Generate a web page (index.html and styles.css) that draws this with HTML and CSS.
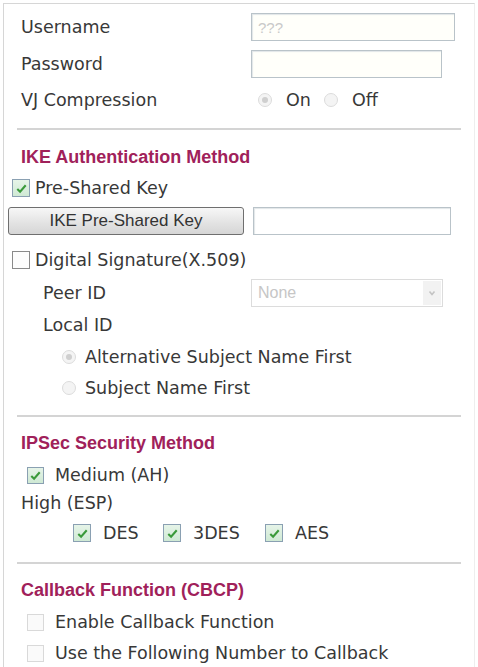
FILE: index.html
```html
<!DOCTYPE html>
<html>
<head>
<meta charset="utf-8">
<link rel="stylesheet" href="styles.css">
</head>
<body>
<div class="panel">
  <div class="row r-user">
    <span class="label">Username</span>
    <span class="input wide"><span class="ph">???</span></span>
  </div>
  <div class="row r-pass">
    <span class="label">Password</span>
    <span class="input pass"></span>
  </div>
  <div class="row r-vj">
    <span class="label">VJ Compression</span>
    <span class="radios">
      <span class="radio on"></span><span class="rtext">On</span>
      <span class="radio"></span><span class="rtext">Off</span>
    </span>
  </div>
  <div class="sep sep1"></div>

  <div class="heading h-ike">IKE Authentication Method</div>
  <div class="row r-psk">
    <span class="cb checked small-ind"><svg viewBox="0 0 16 16"><path d="M3.5 8.5 L6.5 11.5 L12.5 4.5" fill="none" stroke="#3a9a3a" stroke-width="2.2"/></svg></span>
    <span class="cbtext">Pre-Shared Key</span>
  </div>
  <div class="row r-btn">
    <span class="button">IKE Pre-Shared Key</span>
    <span class="input keyin"></span>
  </div>
  <div class="row r-dig">
    <span class="cb plain small-ind"></span>
    <span class="cbtext">Digital Signature(X.509)</span>
  </div>
  <div class="row r-peer">
    <span class="label ind">Peer ID</span>
    <span class="select"><span class="sel-text">None</span><span class="sel-btn"><svg viewBox="0 0 10 10"><path d="M2.5 3.5 L5 6.5 L7.5 3.5" fill="none" stroke="#c4c4c4" stroke-width="1.6"/></svg></span></span>
  </div>
  <div class="row r-local">
    <span class="label ind">Local ID</span>
  </div>
  <div class="row r-alt">
    <span class="radio on rind"></span><span class="rtext">Alternative Subject Name First</span>
  </div>
  <div class="row r-subj">
    <span class="radio rind"></span><span class="rtext">Subject Name First</span>
  </div>
  <div class="sep sep2"></div>

  <div class="heading h-ipsec">IPSec Security Method</div>
  <div class="row r-med">
    <span class="cb checked mind"><svg viewBox="0 0 16 16"><path d="M3.5 8.5 L6.5 11.5 L12.5 4.5" fill="none" stroke="#3a9a3a" stroke-width="2.2"/></svg></span>
    <span class="cbtext gap">Medium (AH)</span>
  </div>
  <div class="row r-high">
    <span class="label">High (ESP)</span>
  </div>
  <div class="row r-des">
    <span class="cb checked big"><svg viewBox="0 0 16 16"><path d="M3.5 8.5 L6.5 11.5 L12.5 4.5" fill="none" stroke="#3a9a3a" stroke-width="2.2"/></svg></span>
    <span class="cbtext des-gap w-des">DES</span>
    <span class="cb checked big"><svg viewBox="0 0 16 16"><path d="M3.5 8.5 L6.5 11.5 L12.5 4.5" fill="none" stroke="#3a9a3a" stroke-width="2.2"/></svg></span>
    <span class="cbtext des-gap w-3des">3DES</span>
    <span class="cb checked big"><svg viewBox="0 0 16 16"><path d="M3.5 8.5 L6.5 11.5 L12.5 4.5" fill="none" stroke="#3a9a3a" stroke-width="2.2"/></svg></span>
    <span class="cbtext des-gap">AES</span>
  </div>
  <div class="sep sep3"></div>

  <div class="heading h-cb">Callback Function (CBCP)</div>
  <div class="row r-en">
    <span class="cb disabled mind"></span>
    <span class="cbtext gap">Enable Callback Function</span>
  </div>
  <div class="row r-use">
    <span class="cb disabled mind"></span>
    <span class="cbtext gap">Use the Following Number to Callback</span>
  </div>
</div>
</body>
</html>
```
FILE: styles.css
```css
html, body {
  margin: 0;
  padding: 0;
  background: #ffffff;
}
body {
  font-family: "DejaVu Sans", Verdana, sans-serif;
  font-size: 17.5px;
  color: #383838;
  width: 478px;
  height: 667px;
  overflow: hidden;
}
.panel {
  margin: 3px 0 0 3px;
  width: 472px;
  height: 664px;
  overflow: hidden;
  border-left: 1px solid #d6d6d6;
  border-top: 1px solid #d6d6d6;
  border-right: 1px solid #eeeeee;
  padding-top: 5px;
  box-sizing: border-box;
}
.row {
  display: flex;
  align-items: center;
  padding-left: 17px;
}
.label {
  width: 230px;
  flex: none;
}
.label.ind {
  padding-left: 22px;
  width: 208px;
}
.r-user { height: 36px; }
.r-pass { height: 37px; }
.r-vj { height: 36px; }
.input {
  box-sizing: border-box;
  height: 28px;
  border: 1px solid #b9c3c9;
  box-shadow: inset 1px 1px 1px #e2e6e8;
  background: #fffffa;
  display: flex;
  align-items: center;
  padding-left: 6px;
}
.input.wide { width: 204px; }
.input.pass { width: 191px; }
.input.keyin { width: 198px; margin-left: 9px; background: #fff; }
.ph {
  font-family: "Liberation Sans", Arial, sans-serif;
  font-size: 15px;
  color: #c9c9c9;
}
.radios {
  display: flex;
  align-items: center;
  padding-left: 7px;
}
.radio {
  width: 14px;
  height: 14px;
  border-radius: 50%;
  border: 1px solid #dcdcdc;
  background: #f4f4f4;
  box-sizing: border-box;
  position: relative;
  flex: none;
}
.radio.on::after {
  content: "";
  position: absolute;
  left: 3px;
  top: 3px;
  width: 6px;
  height: 6px;
  border-radius: 50%;
  background: #cfcfcf;
}
.rtext { margin-left: 9px; }
.radios .rtext { margin-left: 14px; margin-right: 13px; }
.rind { margin-left: 41px; }

.sep {
  height: 2px;
  background: #d4d4d4;
  margin-left: 13px;
  width: 444px;
}
.sep1 { margin-top: 10px; }
.sep2 { margin-top: 13px; }
.sep3 { margin-top: 9px; }

.heading {
  height: 28px;
  display: flex;
  align-items: center;
  padding-left: 17px;
  font-family: "Liberation Sans", Arial, sans-serif;
  font-weight: bold;
  font-size: 18px;
  color: #a0215a;
}
.h-ike { margin-top: 13px; }
.h-ipsec { margin-top: 12px; }
.h-cb { margin-top: 12px; }

.cb {
  width: 17px;
  height: 17px;
  box-sizing: border-box;
  flex: none;
  display: flex;
  align-items: center;
  justify-content: center;
}
.cb svg { width: 15px; height: 15px; }
.cb.big { width: 18px; height: 18px; }
.cb.checked {
  border: 1px solid #8aa0b2;
  background: linear-gradient(#e6f4e8, #cfe9d4);
}
.cb.plain {
  border: 1px solid #8a8a8a;
  background: #fdfdfd;
}
.cb.disabled {
  border: 1px solid #d9d9d9;
  background: #fafafa;
}
.small-ind { margin-left: -9px; width: 18px; height: 18px; }
.mind { margin-left: 6px; }
.cbtext { margin-left: 5px; }
.cbtext.gap { margin-left: 11px; }
.cbtext.des-gap { margin-left: 12px; }

.r-psk { height: 34px; }
.r-btn { height: 28px; margin-top: 2px; padding-left: 4px; }
.button {
  box-sizing: border-box;
  width: 236px;
  height: 28px;
  border: 1px solid #6f6f6f;
  border-radius: 3px;
  background: linear-gradient(#f7f7f7, #e2e2e2 60%, #d6d6d6);
  font-family: "Liberation Sans", Arial, sans-serif;
  font-size: 17px;
  color: #333;
  display: flex;
  align-items: center;
  justify-content: center;
  flex: none;
}
.r-dig { height: 32px; margin-top: 9px; }
.r-peer { height: 34px; }
.select {
  box-sizing: border-box;
  width: 192px;
  height: 28px;
  border: 1px solid #dcdcdc;
  background: #fff;
  display: flex;
  align-items: center;
  justify-content: space-between;
  padding-left: 6px;
}
.sel-text {
  font-family: "Liberation Sans", Arial, sans-serif;
  font-size: 16px;
  color: #c6c6c6;
}
.sel-btn {
  width: 18px;
  height: 24px;
  margin-right: 1px;
  background: #f2f2f2;
  display: flex;
  align-items: center;
  justify-content: center;
}
.sel-btn svg { width: 10px; height: 10px; }
.r-local { height: 30px; }
.r-alt { height: 34px; }
.r-subj { height: 28px; }

.r-med { height: 36px; }
.r-high { height: 20px; }
.r-des { height: 40px; padding-left: 69px; }
.w-des { width: 60px; }
.w-3des { width: 72px; }

.r-en { height: 36px; }
.r-use { height: 26px; }
```
